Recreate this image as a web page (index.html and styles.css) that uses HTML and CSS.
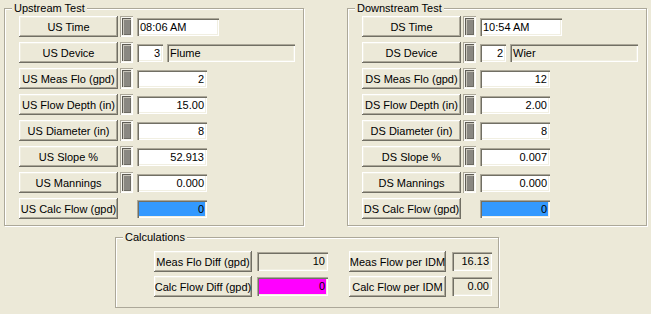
FILE: index.html
```html
<!DOCTYPE html>
<html lang="en">
<head>
    <meta charset="UTF-8">
    <title>Flow Test</title>
    <link rel="stylesheet" href="styles.css">
</head>
<body>
    <div class="top">
        <fieldset class="group test">
            <legend>Upstream Test</legend>
            <div class="rows">
                <div class="row"><div class="btn">US Time</div><span class="gauge"><i></i></span><div class="field time">08:06 AM</div></div>
                <div class="row"><div class="btn">US Device</div><span class="gauge"><i></i></span><div class="field num code">3</div><div class="field ro name">Flume</div></div>
                <div class="row"><div class="btn">US Meas Flo (gpd)</div><span class="gauge"><i></i></span><div class="field num">2</div></div>
                <div class="row"><div class="btn">US Flow Depth (in)</div><span class="gauge"><i></i></span><div class="field num">15.00</div></div>
                <div class="row"><div class="btn">US Diameter (in)</div><span class="gauge"><i></i></span><div class="field num">8</div></div>
                <div class="row"><div class="btn">US Slope %</div><span class="gauge"><i></i></span><div class="field num">52.913</div></div>
                <div class="row"><div class="btn">US Mannings</div><span class="gauge"><i></i></span><div class="field num">0.000</div></div>
                <div class="row"><div class="btn">US Calc Flow (gpd)</div><span class="spacer"></span><div class="field num blue">0</div></div>
            </div>
        </fieldset>
        <fieldset class="group test">
            <legend>Downstream Test</legend>
            <div class="rows">
                <div class="row"><div class="btn">DS Time</div><span class="gauge"><i></i></span><div class="field time">10:54 AM</div></div>
                <div class="row"><div class="btn">DS Device</div><span class="gauge"><i></i></span><div class="field num code">2</div><div class="field ro name">Wier</div></div>
                <div class="row"><div class="btn">DS Meas Flo (gpd)</div><span class="gauge"><i></i></span><div class="field num">12</div></div>
                <div class="row"><div class="btn">DS Flow Depth (in)</div><span class="gauge"><i></i></span><div class="field num">2.00</div></div>
                <div class="row"><div class="btn">DS Diameter (in)</div><span class="gauge"><i></i></span><div class="field num">8</div></div>
                <div class="row"><div class="btn">DS Slope %</div><span class="gauge"><i></i></span><div class="field num">0.007</div></div>
                <div class="row"><div class="btn">DS Mannings</div><span class="gauge"><i></i></span><div class="field num">0.000</div></div>
                <div class="row"><div class="btn">DS Calc Flow (gpd)</div><span class="spacer"></span><div class="field num blue">0</div></div>
            </div>
        </fieldset>
    </div>

    <fieldset class="group calc">
        <legend>Calculations</legend>
        <div class="calc-rows">
            <div class="row">
                <div class="btn">Meas Flo Diff (gpd)</div><div class="field ro num diff">10</div>
                <div class="btn idm">Meas Flow per IDM</div><div class="field ro num per">16.13</div>
            </div>
            <div class="row">
                <div class="btn">Calc Flow Diff (gpd)</div><div class="field num diff pink">0</div>
                <div class="btn idm">Calc Flow per IDM</div><div class="field ro num per">0.00</div>
            </div>
        </div>
    </fieldset>
</body>
</html>
```

FILE: styles.css
```css
body {
    margin: 0;
    background-color: #ece9d8;
    font-family: "Liberation Sans", Arial, sans-serif;
    font-size: 11px;
    color: #000;
}
.top {
    display: flex;
    gap: 43px;
    padding: 1px 0 0 4px;
}
.group {
    margin: 0;
    padding: 0;
    box-sizing: border-box;
    border: 1px solid #aca899;
    box-shadow: inset 1px 1px #fff, 1px 1px #fff;
}
.group legend {
    margin-left: 7px;
    padding: 0 2px;
    line-height: 14px;
    background-color: #ece9d8;
}
.test {
    width: 300px;
}
.rows {
    display: flex;
    flex-direction: column;
    gap: 5px;
    padding: 1px 0 6px 14px;
}
.row {
    display: flex;
    align-items: center;
    height: 21px;
}
.btn {
    box-sizing: border-box;
    width: 99px;
    height: 21px;
    margin-right: 2px;
    display: flex;
    align-items: center;
    justify-content: center;
    white-space: nowrap;
    background-color: #ece9d8;
    box-shadow: inset -1px -1px #716f64, inset 1px 1px #fff, inset -2px -2px #aca899, inset 2px 2px #f1efe2;
}
.gauge {
    box-sizing: border-box;
    width: 13px;
    height: 21px;
    margin-right: 4px;
    padding: 2px;
    background-color: #f7f6f0;
    box-shadow: inset 1px 1px #aca899, inset -1px -1px #fff;
}
.gauge i {
    display: block;
    height: 100%;
    box-sizing: border-box;
    background-color: #8a8882;
    border-top: 1px solid #5e5c55;
    border-left: 1px solid #5e5c55;
    box-shadow: inset 1px 1px #c9c6bb, inset -1px -1px #6d6b64;
}
.spacer {
    width: 17px;
}
.field {
    box-sizing: border-box;
    height: 18px;
    width: 70px;
    padding: 0 3px;
    line-height: 18px;
    white-space: nowrap;
    overflow: hidden;
    background-color: #fff;
    box-shadow: inset 1px 1px #aca899, inset 2px 2px #716f64, inset -1px -1px #fff, inset -2px -2px #f1efe2;
}
.field.time {
    width: 82px;
}
.field.code {
    width: 26px;
}
.field.name {
    width: 128px;
    margin-left: 4px;
}
.num {
    text-align: right;
}
.ro {
    background-color: #ece9d8;
}
.blue {
    background-color: #3399ff;
}
.pink {
    background-color: #ff00ff;
}
.calc {
    width: 384px;
    margin: 4px 0 0 115px;
}
.calc-rows {
    display: flex;
    flex-direction: column;
    gap: 4px;
    padding: 7px 0 10px 38px;
}
.calc-rows .btn {
    width: 98px;
    margin-right: 5px;
}
.calc-rows .btn.idm {
    width: 97px;
    margin-right: 6px;
}
.calc-rows .field {
    height: 19px;
    line-height: 19px;
}
.field.diff {
    width: 71px;
    margin-right: 21px;
}
.field.per {
    width: 40px;
}
```
